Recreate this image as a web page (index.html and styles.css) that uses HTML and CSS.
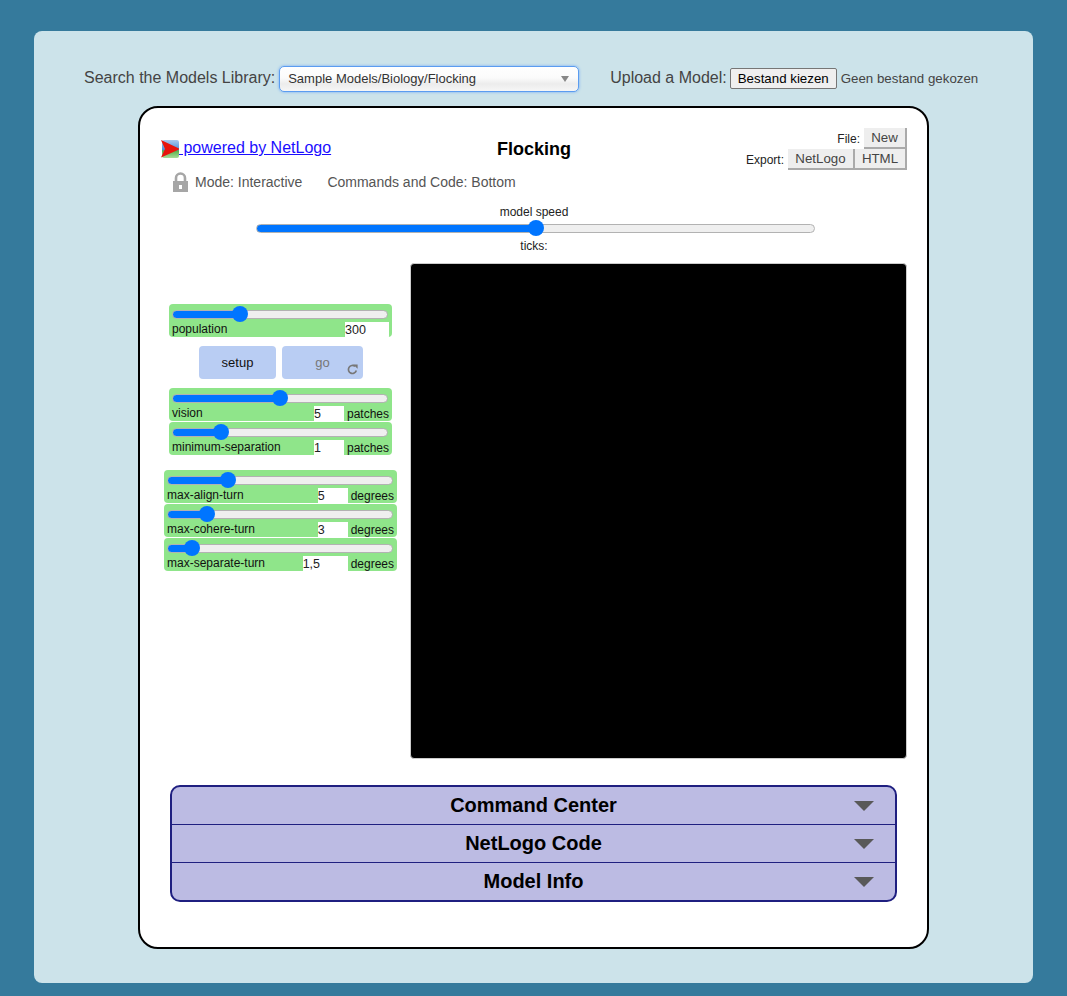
FILE: index.html
```html
<!DOCTYPE html>
<html lang="en">
<head>
    <meta charset="UTF-8">
    <title>NetLogo Web</title>
    <link rel="stylesheet" href="styles.css">
</head>
<body>
    <div class="page-card">
        <div class="top-bar">
            <span class="top-label">Search the Models Library:</span>
            <div class="model-select">
                <span class="select-text">Sample Models/Biology/Flocking</span>
                <span class="select-arrow"></span>
            </div>
            <span class="top-label upload-label">Upload a Model:</span>
            <button class="file-button">Bestand kiezen</button>
            <span class="file-name">Geen bestand gekozen</span>
        </div>

        <div class="model-box">
            <div class="model-header">
                <a class="powered" href="#">
                    <svg class="logo" width="18" height="18" viewBox="0 0 18 18">
                        <defs>
                            <linearGradient id="logo-bg" x1="0" y1="0" x2="0" y2="1">
                                <stop offset="0" stop-color="#a9c9ee"/>
                                <stop offset="0.55" stop-color="#4c8fd8"/>
                                <stop offset="0.6" stop-color="#58b04c"/>
                                <stop offset="1" stop-color="#a8dc98"/>
                            </linearGradient>
                        </defs>
                        <rect x="1" y="0" width="17" height="18" rx="2" fill="url(#logo-bg)"/>
                        <path d="M0 0 L19 9 L0 17.5 L4 9 Z" fill="#e8140c"/>
                    </svg>
                    <span> powered by NetLogo</span>
                </a>
                <div class="model-title">Flocking</div>
                <div class="file-tools">
                    <div class="tool-row">
                        <span>File:</span>
                        <button class="tool-button new-button">New</button>
                    </div>
                    <div class="tool-row">
                        <span>Export:</span>
                        <button class="tool-button netlogo-button">NetLogo</button>
                        <button class="tool-button html-button">HTML</button>
                    </div>
                </div>
            </div>

            <div class="mode-row">
                <svg class="lock" width="17" height="20" viewBox="0 0 17 20">
                    <path d="M1 9 H16 V20 H1 Z M7 13 V17 H10 V13 Z" fill="#a6a6a6" fill-rule="evenodd"/>
                    <path d="M4 9 V6 A4.5 4.5 0 0 1 13 6 V9" fill="none" stroke="#a6a6a6" stroke-width="2.6"/>
                </svg>
                <span class="mode-text">Mode: Interactive</span>
                <span class="code-text">Commands and Code: Bottom</span>
            </div>

            <div class="speed">
                <div class="speed-label">model speed</div>
                <input class="range speed-range" type="range" min="0" max="100" value="50" style="--v:0.5">
                <div class="speed-label ticks">ticks:</div>
            </div>

            <div class="workspace">
                <div class="widgets">
                    <div class="slider">
                        <input class="range" type="range" min="0" max="1000" value="300" style="--v:0.3">
                        <div class="slider-row">
                            <span class="slider-name">population</span>
                            <input class="slider-value wide-pop" type="text" value="300">
                        </div>
                    </div>

                    <div class="buttons">
                        <button class="run-button setup-button">setup</button>
                        <button class="run-button go-button">
                            go
                            <svg class="forever" width="11" height="11" viewBox="0 0 11 11">
                                <path d="M9.3 6.5 A4 4 0 1 1 8 2.4" fill="none" stroke="#777" stroke-width="1.7"/>
                                <path d="M6.2 0.4 L10.6 0.4 L10.6 4.8 Z" fill="#777"/>
                            </svg>
                        </button>
                    </div>

                    <div class="slider">
                        <input class="range" type="range" min="0" max="10" value="5" style="--v:0.5">
                        <div class="slider-row">
                            <span class="slider-name">vision</span>
                            <input class="slider-value" type="text" value="5">
                            <span class="slider-unit">patches</span>
                        </div>
                    </div>
                    <div class="slider">
                        <input class="range" type="range" min="0" max="5" value="1" style="--v:0.2">
                        <div class="slider-row">
                            <span class="slider-name">minimum-separation</span>
                            <input class="slider-value" type="text" value="1">
                            <span class="slider-unit">patches</span>
                        </div>
                    </div>

                    <div class="slider slider-wide first-wide">
                        <input class="range" type="range" min="0" max="20" value="5" style="--v:0.25">
                        <div class="slider-row">
                            <span class="slider-name">max-align-turn</span>
                            <input class="slider-value" type="text" value="5">
                            <span class="slider-unit">degrees</span>
                        </div>
                    </div>
                    <div class="slider slider-wide">
                        <input class="range" type="range" min="0" max="20" value="3" style="--v:0.15">
                        <div class="slider-row">
                            <span class="slider-name">max-cohere-turn</span>
                            <input class="slider-value" type="text" value="3">
                            <span class="slider-unit">degrees</span>
                        </div>
                    </div>
                    <div class="slider slider-wide">
                        <input class="range" type="range" min="0" max="20" value="1.5" step="0.25" style="--v:0.075">
                        <div class="slider-row">
                            <span class="slider-name">max-separate-turn</span>
                            <input class="slider-value wide-sep" type="text" value="1,5">
                            <span class="slider-unit">degrees</span>
                        </div>
                    </div>
                </div>
                <div class="view"></div>
            </div>

            <div class="accordion">
                <div class="accordion-row">Command Center<span class="triangle"></span></div>
                <div class="accordion-row">NetLogo Code<span class="triangle"></span></div>
                <div class="accordion-row">Model Info<span class="triangle"></span></div>
            </div>
        </div>
    </div>
</body>
</html>
```

FILE: styles.css
```css
body {
    font-family: "Liberation Sans", Arial, sans-serif;
    background-color: #357a9c;
    margin: 0;
    padding: 31px 34px 13px;
}

button {
    font-family: inherit;
}

.page-card {
    background-color: #cce3ea;
    border-radius: 8px;
    height: 952px;
    box-sizing: border-box;
    padding-top: 35px;
}

/* top bar */

.top-bar {
    display: flex;
    align-items: center;
    height: 26px;
    margin-left: 50px;
    margin-bottom: 14px;
    color: #444;
}

.top-label {
    margin-bottom: 2px;
    font-size: 16px;
    white-space: nowrap;
}

.upload-label {
    margin-left: 31px;
    margin-right: -1px;
}

.model-select {
    display: flex;
    align-items: center;
    justify-content: space-between;
    width: 300px;
    height: 26px;
    box-sizing: border-box;
    margin-left: 4px;
    padding: 0 9px 0 8px;
    border: 1px solid #5b9cf0;
    border-radius: 5px;
    background: linear-gradient(to bottom, #fff 0%, #fbfbfb 45%, #ececec 70%, #f6f6f6 100%);
    box-shadow: 0 0 3px #6ea8f5;
    font-size: 13px;
    color: #333;
}

.select-text {
    margin-bottom: 2px;
}

.select-arrow {
    width: 0;
    height: 0;
    border-left: 4px solid transparent;
    border-right: 4px solid transparent;
    border-top: 6px solid #888;
}

.file-button {
    width: 107px;
    height: 21px;
    margin: 0 0 2px 4px;
    padding: 0;
    border: 1px solid #767676;
    border-radius: 2px;
    background-color: #efefef;
    font-size: 13.3px;
    color: #000;
}

.file-name {
    margin: 0 0 2px 4px;
    font-size: 13.3px;
    white-space: nowrap;
}

/* model box */

.model-box {
    width: 791px;
    height: 843px;
    box-sizing: border-box;
    margin-left: 104px;
    padding: 20px 20px 0 21px;
    border: 2px solid #000;
    border-radius: 20px;
    background-color: #fff;
}

.model-header {
    display: grid;
    grid-template-columns: 1fr auto 1fr;
    height: 42px;
}

.powered {
    display: flex;
    align-items: flex-start;
    height: 20px;
    margin-top: 11px;
    font-size: 16px;
    color: #1a0dff;
    white-space: pre;
}

.logo {
    margin-top: 1px;
    flex-shrink: 0;
}

.model-title {
    margin-top: 11px;
    font-size: 18px;
    font-weight: bold;
    color: #000;
}

.file-tools {
    font-size: 12px;
    color: #222;
}

.tool-row {
    display: flex;
    align-items: center;
    justify-content: flex-end;
    height: 21px;
}

.tool-button {
    height: 21px;
    padding: 0;
    border: none;
    border-right: 2px solid #aaa;
    border-bottom: 2px solid #aaa;
    background-color: #eee;
    font-size: 13.3px;
    color: #444;
}

.new-button {
    width: 43px;
    margin-left: 4px;
}

.netlogo-button {
    width: 67px;
    margin-left: 4px;
}

.html-button {
    width: 52px;
}

.mode-row {
    display: flex;
    align-items: center;
    height: 20px;
    margin: 2px 0 0 11px;
    font-size: 14px;
    color: #555;
}

.mode-text {
    margin-left: 6px;
}

.code-text {
    margin-left: 25px;
}

/* speed slider */

.speed {
    margin-top: 13px;
    height: 58px;
    text-align: center;
}

.speed-label {
    height: 15px;
    font-size: 12px;
    line-height: 15px;
    color: #222;
}

.ticks {
    margin-top: 3px;
}

/* range inputs */

.range {
    -webkit-appearance: none;
    appearance: none;
    display: block;
    height: 16px;
    margin: 2px 3px 0;
    width: calc(100% - 7px);
    background: transparent;
}

.speed-range.range {
    width: 559px;
    margin: 0 0 0 95px;
}

.range::-webkit-slider-runnable-track {
    height: 9px;
    box-sizing: border-box;
    border: 1px solid #b2b2b2;
    border-radius: 5px;
    background: linear-gradient(to right,
        #0075ff calc(8px + var(--v) * (100% - 16px)),
        #efefef 0);
}

.range::-webkit-slider-thumb {
    -webkit-appearance: none;
    appearance: none;
    width: 16px;
    height: 16px;
    margin-top: -4.5px;
    border-radius: 50%;
    background-color: #0075ff;
}

/* workspace */

.workspace {
    display: grid;
    grid-template-columns: 249px 497px;
    height: 496px;
}

.widgets {
    padding-top: 41px;
}

.slider {
    width: 223px;
    height: 33px;
    margin: 0 0 1px 8px;
    border-radius: 4px;
    background-color: #8fe58a;
    overflow: hidden;
}

.slider-wide {
    width: 233px;
    margin-left: 3px;
}

.first-wide {
    margin-top: 15px;
}

.slider-row {
    display: flex;
    align-items: flex-end;
    height: 15px;
    padding: 0 3px;
    font-size: 12px;
    color: #111;
    box-sizing: border-box;
}

.slider-name {
    flex: 1;
    height: 16px;
    line-height: 16px;
    white-space: nowrap;
}

.slider-value {
    width: 30px;
    height: 15px;
    box-sizing: border-box;
    padding: 0;
    border: none;
    background-color: #fff;
    font-family: inherit;
    font-size: 12.5px;
    color: #222;
}

.wide-pop {
    width: 44px;
}

.wide-sep {
    width: 45px;
}

.slider-unit {
    height: 15px;
    margin-left: 3px;
    line-height: 17px;
}

.buttons {
    display: flex;
    gap: 6px;
    margin: 9px 0 9px 38px;
}

.run-button {
    position: relative;
    height: 33px;
    padding: 0;
    border: none;
    border-radius: 4px;
    background-color: #b9cdf3;
    font-size: 13px;
}

.setup-button {
    width: 77px;
    color: #111;
}

.go-button {
    width: 81px;
    color: #777;
}

.forever {
    position: absolute;
    right: 5px;
    bottom: 4px;
}

.view {
    box-sizing: border-box;
    border: 1px solid #ccc;
    border-radius: 4px;
    background-color: #000;
}

/* accordion */

.accordion {
    width: 727px;
    box-sizing: border-box;
    margin: 26px 0 0 9px;
    border: 2px solid #1f1f80;
    border-radius: 10px;
    background-color: #bcbbe3;
    overflow: hidden;
}

.accordion-row {
    position: relative;
    height: 38px;
    box-sizing: border-box;
    border-bottom: 1px solid #1f1f80;
    font-size: 20px;
    font-weight: bold;
    line-height: 37px;
    text-align: center;
    color: #000;
}

.accordion-row:last-child {
    height: 37px;
    border-bottom: none;
}

.triangle {
    position: absolute;
    top: 14px;
    right: 21px;
    width: 0;
    height: 0;
    border-left: 10px solid transparent;
    border-right: 10px solid transparent;
    border-top: 10px solid #595959;
}
```
